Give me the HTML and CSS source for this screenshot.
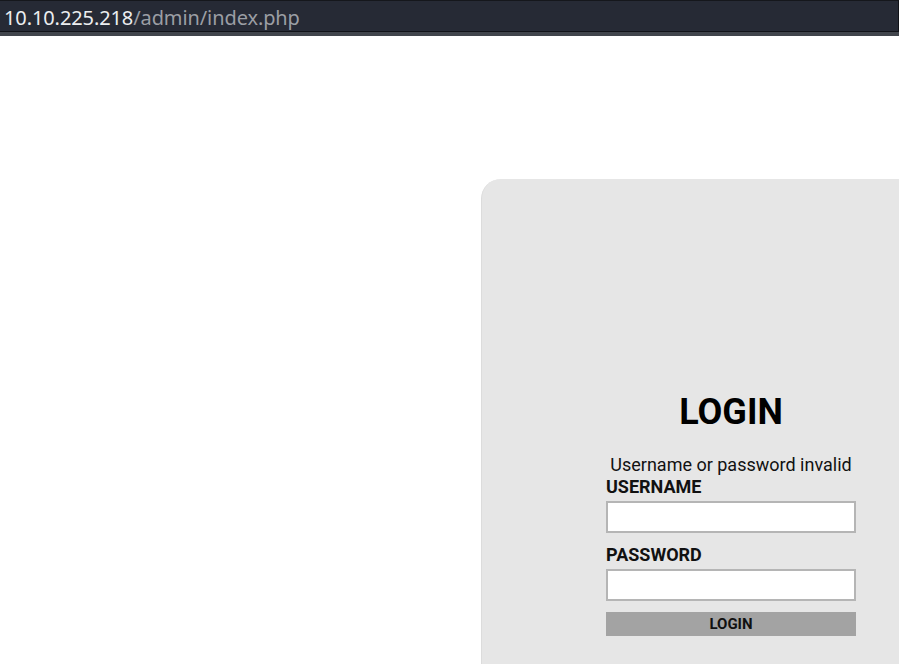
FILE: index.html
```html
<!DOCTYPE html>
<html>
<head>
<meta charset="utf-8">
<link rel="stylesheet" href="styles.css">
</head>
<body>
<header class="urlbar">
  <div class="url"><span class="host">10.10.225.218</span><span class="path">/admin/index.php</span></div>
</header>
<div class="strip"></div>
<main class="page">
  <section class="card">
    <form class="form">
      <h1 class="title">LOGIN</h1>
      <p class="error">Username or password invalid</p>
      <label class="label">USERNAME</label>
      <input class="field" type="text">
      <label class="label pw">PASSWORD</label>
      <input class="field" type="password">
      <button class="btn" type="button">LOGIN</button>
    </form>
  </section>
</main>
</body>
</html>
```
FILE: styles.css
```css
html, body { margin: 0; padding: 0; }
body { background: #fff; width: 899px; height: 664px; overflow: hidden; font-family: Roboto, "Liberation Sans", sans-serif; }
.urlbar {
  height: 30px;
  background: #262a35;
  border-top: 1px solid #15171c;
  border-bottom: 1px solid #111318;
  border-right: 1px solid #111318;
  display: flex;
  align-items: center;
}
.url { font-family: "Noto Sans", "Open Sans", sans-serif; font-size: 20px; padding-left: 4px; letter-spacing: -0.1px; padding-top: 2px; }
.host { color: #eceef0; }
.path { color: #9b9ea4; }
.strip { height: 4px; background: #41454c; }
.page { padding: 143px 0 0 481px; height: 628px; box-sizing: border-box; }
.card {
  background: #e6e6e6;
  border-radius: 20px 0 0 0;
  height: 100%;
  border-left: 1px solid #dcdcdc;
  box-sizing: border-box;
  padding: 0 0 0 124px;
}
.form { width: 250px; display: flex; flex-direction: column; padding-top: 212px; }
.title { margin: 0; text-align: center; font-size: 36px; font-weight: 700; color: #000; line-height: 42px; }
.error { margin: 21px 0 0; text-align: center; font-size: 18px; line-height: 22px; color: #111; }
.label { font-size: 18px; font-weight: 700; line-height: 22px; color: #111; margin: 0; }
.label.pw { margin-top: 11px; }
.field {
  margin: 3px 0 0;
  height: 32px;
  width: 250px;
  box-sizing: border-box;
  border: 2px solid #b5b5b5;
  background: #fff;
  padding: 0 4px;
}
.btn {
  margin-top: 11px;
  height: 24px;
  width: 250px;
  border: none;
  background: #a3a3a3;
  font-family: Roboto, sans-serif;
  font-weight: 700;
  font-size: 15px;
  color: #111;
  padding: 0;
}
```
